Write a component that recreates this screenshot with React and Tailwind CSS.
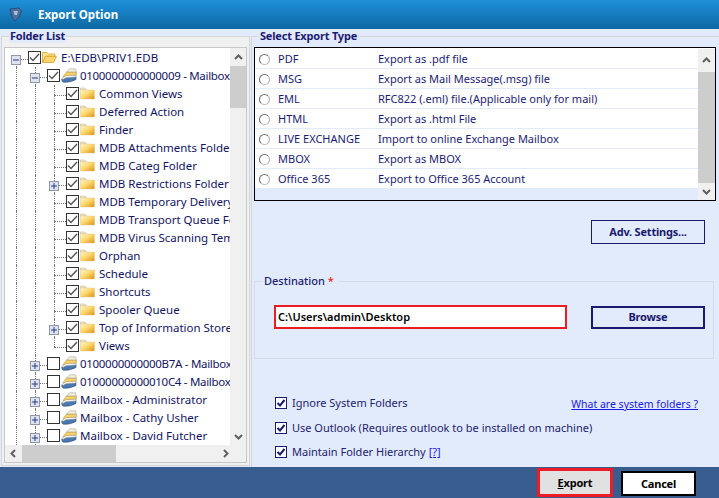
const TREE = [
  { level: 0, label: "E:\\EDB\\PRIV1.EDB", checked: true, exp: "minus", icon: "open", down: true },
  { level: 1, label: "0100000000000009 - Mailbox", checked: true, exp: "minus", icon: "box", down: true, tight: true },
  { level: 2, label: "Common Views", checked: true },
  { level: 2, label: "Deferred Action", checked: true },
  { level: 2, label: "Finder", checked: true },
  { level: 2, label: "MDB Attachments Folder", checked: true },
  { level: 2, label: "MDB Categ Folder", checked: true },
  { level: 2, label: "MDB Restrictions Folder", checked: true, exp: "plus" },
  { level: 2, label: "MDB Temporary Delivery", checked: true },
  { level: 2, label: "MDB Transport Queue Folder", checked: true },
  { level: 2, label: "MDB Virus Scanning Temp", checked: true },
  { level: 2, label: "Orphan", checked: true },
  { level: 2, label: "Schedule", checked: true },
  { level: 2, label: "Shortcuts", checked: true },
  { level: 2, label: "Spooler Queue", checked: true },
  { level: 2, label: "Top of Information Store", checked: true, exp: "plus" },
  { level: 2, label: "Views", checked: true, last: true },
  { level: 1, label: "0100000000000B7A - Mailbox", exp: "plus", icon: "box", tight: true },
  { level: 1, label: "01000000000010C4 - Mailbox", exp: "plus", icon: "box", tight: true },
  { level: 1, label: "Mailbox - Administrator", exp: "plus", icon: "box" },
  { level: 1, label: "Mailbox - Cathy Usher", exp: "plus", icon: "box" },
  { level: 1, label: "Mailbox - David Futcher", exp: "plus", icon: "box" },
];

const TYPES = [
  ["PDF", "Export as .pdf file"],
  ["MSG", "Export as Mail Message(.msg) file"],
  ["EML", "RFC822 (.eml) file.(Applicable only for mail)"],
  ["HTML", "Export as .html File"],
  ["LIVE EXCHANGE", "Import to online Exchange Mailbox"],
  ["MBOX", "Export as MBOX"],
  ["Office 365", "Export to Office 365 Account"],
];

function Chevron({ dir }) {
  const d = {
    up: "M2 7 L5.5 3.5 L9 7",
    down: "M2 4 L5.5 7.5 L9 4",
    left: "M7 2 L3.5 5.5 L7 9",
    right: "M4 2 L7.5 5.5 L4 9",
  }[dir];
  return (
    <svg width="11" height="11" viewBox="0 0 11 11" className="shrink-0">
      <path d={d} fill="none" stroke="#606060" strokeWidth="2" />
    </svg>
  );
}

function Folder({ open }) {
  return (
    <svg width="15" height="14" viewBox="0 0 15 14" className="shrink-0">
      <defs>
        <linearGradient id="fold" x1="0" y1="0" x2="1" y2="1">
          <stop offset="0" stopColor="#fff6cf" />
          <stop offset="0.5" stopColor="#fcd566" />
          <stop offset="1" stopColor="#d98f14" />
        </linearGradient>
      </defs>
      {open ? (
        <>
          <path d="M0.5 2.5 L5 2.5 L6.5 4 L13 4 L13 6 L3.5 6 L0.5 12.5 Z" fill="#fde39a" stroke="#e0a93a" strokeWidth="0.9" />
          <path d="M3.5 6.5 L14.5 6.5 L11.5 12.5 L0.8 12.5 Z" fill="#fdd56c" stroke="#e0a93a" strokeWidth="0.9" />
        </>
      ) : (
        <>
          <path d="M0.5 4 L0.5 2 L5 2 L6.5 4 Z" fill="#efe8cc" stroke="#c9bd90" strokeWidth="0.6" />
          <path d="M0.5 4 L14.5 4 L14.5 13 L0.5 13 Z" fill="url(#fold)" stroke="#dcc98a" strokeWidth="0.5" />
        </>
      )}
    </svg>
  );
}

function BoxIcon() {
  return (
    <svg width="16" height="15" viewBox="0 0 16 15" className="shrink-0">
      <path d="M0.8 11 L4 8.5 L15 8.5 L15 11.5 Q10 14.5 2.5 14.3 Q0.3 13.5 0.8 11 Z" fill="#4a78b0" stroke="#2b4a7a" strokeWidth="0.6" />
      <path d="M1 10.5 L4.5 7 L15 7 L15 9 L5 9.8 L2 11.5 Z" fill="#f6f6f6" stroke="#8a8a8a" strokeWidth="0.5" />
      <path d="M2 8.5 L5.5 4 L15.3 4 L15.3 7 L5 7.6 L3 9 Z" fill="#f9d26a" stroke="#a58a45" strokeWidth="0.5" />
      <path d="M5.5 4 L8.5 0.8 L14.5 0.8 L15.3 4 Z" fill="#f2eedc" stroke="#9a9a8a" strokeWidth="0.5" />
    </svg>
  );
}

function TreeCheck({ checked }) {
  return (
    <span className="w-[13px] h-[13px] shrink-0 border border-[#333333] bg-white flex items-center justify-center">
      {checked && (
        <svg width="11" height="11" viewBox="0 0 11 11">
          <path d="M1 5.5 L4 8.5 L10 2" fill="none" stroke="#555555" strokeWidth="1.4" />
        </svg>
      )}
    </span>
  );
}

function Expander({ type }) {
  return (
    <span className="absolute left-[-5px] top-[6px] w-[10px] h-[10px] border border-[#8f97a8] bg-[#dfe3ee] flex items-center justify-center">
      <svg width="8" height="8" viewBox="0 0 8 8">
        <path d={type === "plus" ? "M1 4 H7 M4 1 V7" : "M1 4 H7"} stroke="#2a3a8a" strokeWidth="1" />
      </svg>
    </span>
  );
}

function Guide() {
  return <div className="w-[19px] shrink-0 h-full border-l border-dotted border-[#777777]" />;
}

function TreeRow({ row }) {
  const showTop = row.level > 0;
  const showBottom = row.level === 0 || !row.last;
  return (
    <div className="h-[18px] flex items-stretch whitespace-nowrap">
      {row.level >= 1 && <Guide />}
      {row.level >= 2 && <Guide />}
      <div className="relative w-[12px] shrink-0 flex flex-col">
        <div className={`h-[10px] ${showTop ? "border-l border-dotted border-[#777777]" : ""}`} />
        <div className={`flex-1 border-t border-dotted border-[#777777] ${showBottom ? "border-l" : ""}`} />
        {row.exp && <Expander type={row.exp} />}
      </div>
      <div className="flex items-center h-[16px]">
        <TreeCheck checked={row.checked} />
        <span className="w-[15px] ml-px shrink-0 flex items-center">
          {row.icon === "box" ? <BoxIcon /> : <Folder open={row.icon === "open"} />}
        </span>
        <span className={`ml-[4px] mt-[2px] text-[11.5px] leading-[16px] text-[#14145f] ${row.tight ? "tracking-[-0.3px]" : ""}`}>{row.label}</span>
      </div>
    </div>
  );
}

function Radio() {
  return (
    <span className="w-[11px] h-[11px] shrink-0 rounded-full bg-white border-[1.5px] border-t-[#6b6b6b] border-l-[#6b6b6b] border-b-[#c4c4c4] border-r-[#b0b0b0]" />
  );
}

function OptCheck() {
  return (
    <span className="w-[12px] h-[12px] shrink-0 border border-[#1a1a6e] bg-white flex items-center justify-center">
      <svg width="10" height="10" viewBox="0 0 10 10">
        <path d="M1.5 5 L4 7.5 L8.5 2" fill="none" stroke="#1a1a6e" strokeWidth="2" />
      </svg>
    </span>
  );
}

function Legend({ children, className = "" }) {
  return (
    <legend className={`text-[11px] leading-[14px] text-[#1c1c70] h-[14px] ${className}`}>{children}</legend>
  );
}

export default function App() {
  return (
    <div className="w-[719px] h-[498px] overflow-hidden flex flex-col bg-[#e2ebfb] text-[11px] text-[#1c1c70]" style={{ fontFamily: '"Noto Sans", sans-serif' }}>
      <div className="h-[29px] shrink-0 flex items-center bg-gradient-to-b from-[#1f90da] to-[#0c69a2]">
        <svg width="13" height="15" viewBox="0 0 13 15" className="ml-[9px]">
          <path d="M1 2 L10 1 L12.5 4 L10 10 L6 14 L3 10 Z" fill="#4d6f9c" stroke="#2d4c78" strokeWidth="1" />
          <path d="M4.5 4 L9 4 L8 8 L5.5 8 Z" fill="#a9bcd6" />
        </svg>
        <span className="ml-[16px] font-bold text-[11.5px] text-white">Export Option</span>
      </div>

      <div className="flex-1 min-h-0 flex items-stretch">
        <fieldset className="ml-px w-[248px] shrink-0 h-[437px] border border-[#d6d6d6] pl-[2px] pr-[2px] bg-[#f0f0f0]">
          <Legend className="ml-[5px] px-px bg-[#e2ebfb] font-bold tracking-[-0.2px]">Folder List</Legend>
          <div className="mt-[4px] w-[243px] h-[416px] bg-white border border-[#c8c8c8] flex flex-col">
            <div className="flex-1 min-h-0 flex">
              <div className="w-[225px] overflow-hidden pt-px pl-[11px]">
                {TREE.map((r, i) => (
                  <TreeRow key={i} row={r} />
                ))}
              </div>
              <div className="w-[16px] bg-[#f0f0f0] flex flex-col items-center">
                <div className="h-[18px] flex items-center"><Chevron dir="up" /></div>
                <div className="w-full h-[42px] bg-[#cdcdcd]" />
                <div className="flex-1" />
                <div className="h-[18px] flex items-center"><Chevron dir="down" /></div>
              </div>
            </div>
            <div className="h-[17px] bg-[#f0f0f0] flex items-center shrink-0">
              <div className="w-[17px] flex justify-center"><Chevron dir="left" /></div>
              <div className="w-[94px] h-full bg-[#cdcdcd]" />
              <div className="flex-1" />
              <div className="w-[17px] mr-[12px] flex justify-center"><Chevron dir="right" /></div>
            </div>
          </div>
        </fieldset>

        <fieldset className="ml-px flex-1 min-w-0 border-l border-t border-[#d6d6d6] pl-[2px]">
          <Legend className="ml-[5px] px-px font-bold tracking-[-0.2px]">Select Export Type</Legend>
          <div className="mt-[4px] w-[462px] h-[154px] border border-black pt-px flex bg-white">
            <div className="flex-1 min-w-0 bg-[#e2ebfb]">
              {TYPES.map(([name, desc]) => (
                <div key={name} className="h-[20px] bg-white border-b border-[#e2ebfb] flex items-center pl-[4px] pt-[2px]">
                  <Radio />
                  <span className="ml-[8px] w-[100px]">{name}</span>
                  <span>{desc}</span>
                </div>
              ))}
            </div>
            <div className="w-[17px] bg-[#f0f0f0] flex flex-col items-center shrink-0">
              <div className="h-[23px] flex items-center"><Chevron dir="up" /></div>
              <div className="w-full h-[111px] bg-[#cdcdcd]" />
              <div className="flex-1 flex items-center"><Chevron dir="down" /></div>
            </div>
          </div>

          <div className="mt-[19px] flex justify-end pr-[14px]">
            <button className="w-[114px] h-[24px] border border-[#1a1a6e] font-bold tracking-[-0.2px] text-[#1a1a6e] text-[11px]">Adv. Settings...</button>
          </div>

          <fieldset className="mt-[30px] w-[460px] h-[85px] border border-[#d6dbe4]">
            <Legend className="ml-[8px] pl-px pr-[4px] font-medium">
              Destination <span className="text-[#ed1c24]">*</span>
            </Legend>
            <div className="mt-[17px] ml-[19px] flex items-start">
              <div className="w-[293px] h-[24px] border-2 border-[#ed1c24] bg-white flex items-center pl-[2px] font-semibold text-black">C:\Users\admin\Desktop</div>
              <button className="ml-[24px] mt-px w-[114px] h-[23px] border-2 border-[#1a1a6e] font-bold tracking-[-0.2px] text-[#1a1a6e]">Browse</button>
            </div>
          </fieldset>

          <div className="mt-[35px] pl-[21px] pr-[21px] text-[#22226e]">
            <div className="h-[18px] flex items-center">
              <OptCheck />
              <span className="ml-[5px]">Ignore System Folders</span>
              <a className="ml-auto mt-[4px] underline text-[10.5px] text-[#1a1ae6]">What are system folders ?</a>
            </div>
            <div className="mt-[7px] h-[18px] flex items-center">
              <OptCheck />
              <span className="ml-[5px]">Use Outlook (Requires outlook to be installed on machine)</span>
            </div>
            <div className="mt-[6px] h-[18px] flex items-center">
              <OptCheck />
              <span className="ml-[5px]">Maintain Folder Hierarchy</span>
              <a className="ml-[3px] underline text-[#1a1ae6]">[?]</a>
            </div>
          </div>
        </fieldset>
      </div>

      <div className="h-[31px] shrink-0 bg-[#395c8e] flex items-start justify-end pr-[23px]">
        <button className="mt-px w-[76px] h-[29px] border-[3px] border-[#ed1c24] bg-[#e1e1e1] font-bold tracking-[-0.2px] text-black pt-px"><span className="underline">E</span>xport</button>
        <button className="ml-[8px] mt-[4px] w-[75px] h-[25px] border-2 border-black bg-white font-bold tracking-[-0.2px] text-black pt-px">Cancel</button>
      </div>
    </div>
  );
}
